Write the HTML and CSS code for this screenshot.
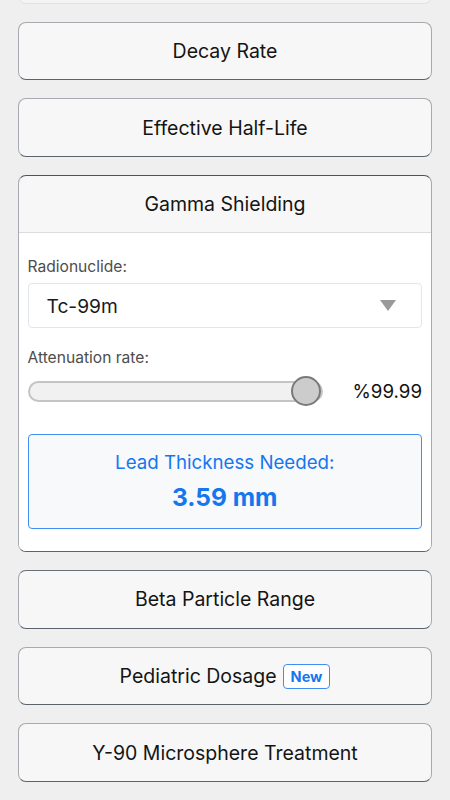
FILE: index.html
```html
<!DOCTYPE html>
<html lang="en">
<head>
<meta charset="utf-8">
<meta name="viewport" content="width=device-width, initial-scale=1">
<title>Calculators</title>
<link rel="stylesheet" href="styles.css">
</head>
<body>
<main class="list">
  <section class="card card-faded"><div class="card-head"></div></section>
  <section class="card"><div class="card-head">Decay Rate</div></section>
  <section class="card"><div class="card-head">Effective Half-Life</div></section>
  <section class="card card-open">
    <div class="card-head">Gamma Shielding</div>
    <div class="card-body">
      <div class="field-label">Radionuclide:</div>
      <div class="select">
        <span class="select-text">Tc-99m</span>
        <svg class="select-arrow" width="16" height="11" viewBox="0 0 16 11"><polygon points="0,0 16,0 8,11" fill="#9a9a9a"/></svg>
      </div>
      <div class="field-label field-label-2">Attenuation rate:</div>
      <div class="slider-row">
        <input class="range" type="range" min="0" max="100" step="0.01" value="99.99">
        <span class="range-value">%99.99</span>
      </div>
      <div class="result">
        <div class="result-label">Lead Thickness Needed:</div>
        <div class="result-value">3.59 mm</div>
      </div>
    </div>
  </section>
  <section class="card card-after-open"><div class="card-head">Beta Particle Range</div></section>
  <section class="card"><div class="card-head">Pediatric Dosage <span class="badge">New</span></div></section>
  <section class="card"><div class="card-head">Y-90 Microsphere Treatment</div></section>
</main>
</body>
</html>
```
FILE: styles.css
```css
* { box-sizing: border-box; }
html, body { margin: 0; padding: 0; }
body {
  background: #efefef;
  font-family: Inter, "Noto Sans", "Liberation Sans", sans-serif;
  color: #111;
  overflow: hidden;
  height: 800px;
}
.list {
  display: flex;
  flex-direction: column;
  gap: 18px;
  padding: 0 18px;
  margin-top: -55px;
}
.card {
  background: #f7f7f7;
  border: 1px solid #a7abaf;
  border-bottom-color: #5b636d;
  border-radius: 8px;
  overflow: hidden;
}
.card-faded {
  border-color: #e2e2e2;
  background: #f4f4f4;
}
.card-open { border-top-color: #4a5562; }
.card-after-open { border-top-color: #6a7078; }
.card-head {
  height: 56.67px;
  display: flex;
  align-items: center;
  justify-content: center;
  gap: 6px;
  font-size: 19.5px;
  font-weight: 400;
  color: #141414;
}
.card-open .card-head {
  border-bottom: 1px solid #dcdcdc;
}
.card-body {
  background: #fff;
  padding: 24.5px 9px 22.5px 8.5px;
}
.field-label {
  font-size: 15.6px;
  line-height: 20px;
  color: #4d4d4d;
}
.select {
  margin-top: 6px;
  height: 45px;
  border: 1px solid #e3e5e7;
  border-radius: 4px;
  background: #fff;
  display: flex;
  align-items: center;
  justify-content: space-between;
  padding: 0 25px 0 18px;
}
.select-text {
  font-size: 19.2px;
  color: #1a1a1a;
}
.field-label-2 { margin-top: 19.5px; }
.slider-row {
  margin-top: 8.7px;
  height: 30px;
  display: flex;
  align-items: center;
  justify-content: space-between;
}
.range {
  -webkit-appearance: none;
  appearance: none;
  width: 75%;
  margin: 0;
  height: 30px;
  background: transparent;
}
.range::-webkit-slider-runnable-track {
  height: 21px;
  border-radius: 11px;
  background: #f1f1f1;
  border: 2px solid #c4c4c4;
}
.range::-webkit-slider-thumb {
  -webkit-appearance: none;
  appearance: none;
  width: 30px;
  height: 30px;
  border-radius: 50%;
  background: #cccccc;
  border: 2px solid #7a7a7a;
  margin-top: -6.5px;
}
.range-value {
  font-size: 18.7px;
  color: #111;
}
.result {
  margin-top: 27.3px;
  height: 95px;
  border: 1px solid #3f8ff3;
  border-radius: 4px;
  background: #f7f9fb;
  display: flex;
  flex-direction: column;
  align-items: center;
  justify-content: center;
  gap: 9px;
  color: #1577ef;
}
.result-label {
  font-size: 18.7px;
  line-height: 22px;
}
.result-value {
  font-size: 24.5px;
  line-height: 28px;
  font-weight: 700;
}
.badge {
  display: inline-flex;
  align-items: center;
  justify-content: center;
  height: 25px;
  padding: 0 7px;
  border: 1px solid #3f8ff3;
  border-radius: 4px;
  font-size: 14.5px;
  font-weight: 700;
  color: #1577ef;
  background: #fff;
}
```
